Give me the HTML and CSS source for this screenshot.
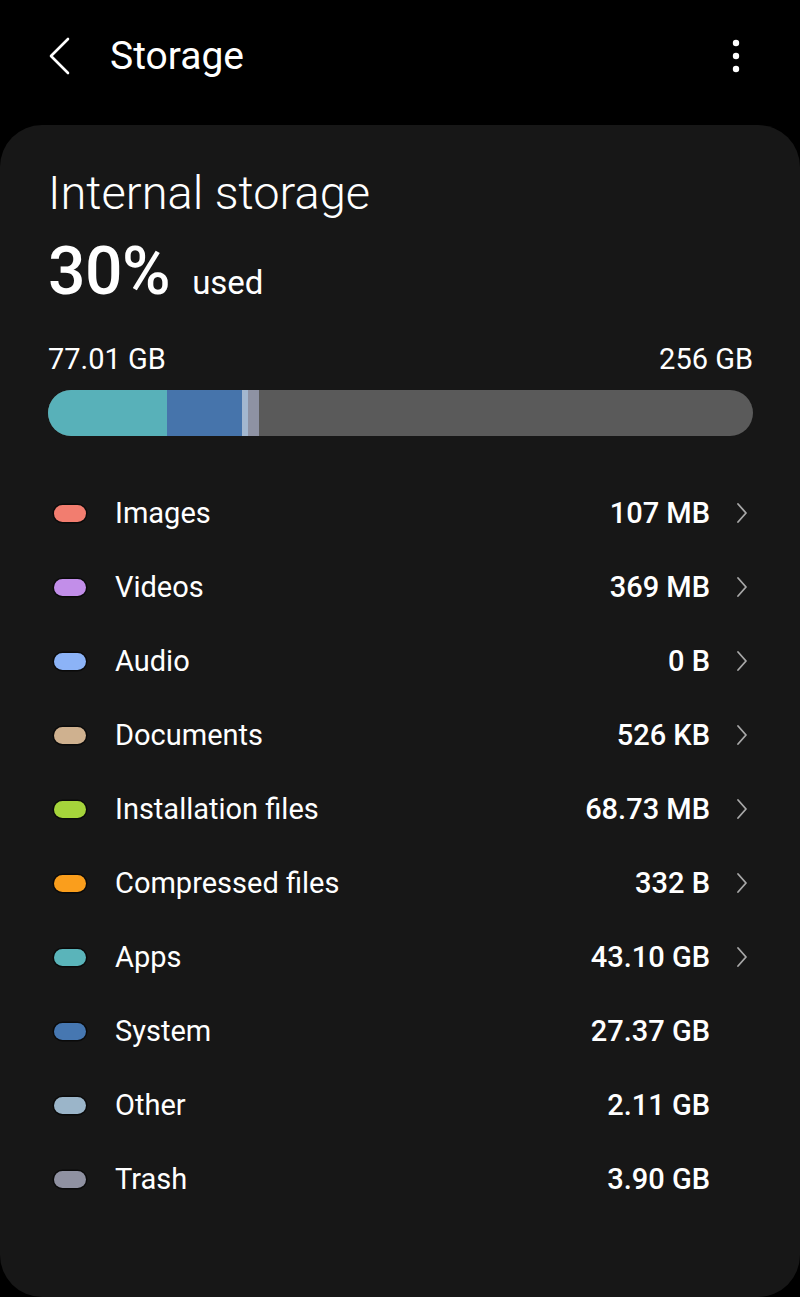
FILE: index.html
```html
<!DOCTYPE html>
<html lang="en">
<head>
<meta charset="utf-8">
<title>Storage</title>
<link rel="stylesheet" href="styles.css">
</head>
<body>
<header class="appbar">
  <svg class="back" width="24" height="40" viewBox="0 0 24 40"><polyline points="20,3 3,20 20,37" fill="none" stroke="#fff" stroke-width="2.6" stroke-linecap="round" stroke-linejoin="round"/></svg>
  <h1 class="title">Storage</h1>
  <svg class="more" width="8" height="34" viewBox="0 0 8 34"><circle cx="4" cy="4" r="3.2" fill="#fff"/><circle cx="4" cy="17" r="3.2" fill="#fff"/><circle cx="4" cy="30" r="3.2" fill="#fff"/></svg>
</header>
<main class="card">
  <div class="heading">Internal storage</div>
  <div class="usage"><span class="pct">30%</span><span class="used">used</span></div>
  <div class="scale"><span>77.01 GB</span><span>256 GB</span></div>
  <div class="bar">
    <div class="seg apps" style="width:16.84%"></div>
    <div class="seg system" style="width:10.69%"></div>
    <div class="seg other" style="width:0.82%"></div>
    <div class="seg trash" style="width:1.52%"></div>
  </div>
  <ul class="list">
    <li class="row"><span class="pill c-images"></span><span class="label">Images</span><span class="value">107 MB</span><span class="chev"><svg width="12" height="22" viewBox="0 0 12 22"><polyline points="2,2 10,11 2,20" fill="none" stroke="#a8a8a8" stroke-width="1.8" stroke-linecap="round" stroke-linejoin="round"/></svg></span></li>
    <li class="row"><span class="pill c-videos"></span><span class="label">Videos</span><span class="value">369 MB</span><span class="chev"><svg width="12" height="22" viewBox="0 0 12 22"><polyline points="2,2 10,11 2,20" fill="none" stroke="#a8a8a8" stroke-width="1.8" stroke-linecap="round" stroke-linejoin="round"/></svg></span></li>
    <li class="row"><span class="pill c-audio"></span><span class="label">Audio</span><span class="value">0 B</span><span class="chev"><svg width="12" height="22" viewBox="0 0 12 22"><polyline points="2,2 10,11 2,20" fill="none" stroke="#a8a8a8" stroke-width="1.8" stroke-linecap="round" stroke-linejoin="round"/></svg></span></li>
    <li class="row"><span class="pill c-docs"></span><span class="label">Documents</span><span class="value">526 KB</span><span class="chev"><svg width="12" height="22" viewBox="0 0 12 22"><polyline points="2,2 10,11 2,20" fill="none" stroke="#a8a8a8" stroke-width="1.8" stroke-linecap="round" stroke-linejoin="round"/></svg></span></li>
    <li class="row"><span class="pill c-install"></span><span class="label">Installation files</span><span class="value">68.73 MB</span><span class="chev"><svg width="12" height="22" viewBox="0 0 12 22"><polyline points="2,2 10,11 2,20" fill="none" stroke="#a8a8a8" stroke-width="1.8" stroke-linecap="round" stroke-linejoin="round"/></svg></span></li>
    <li class="row"><span class="pill c-zip"></span><span class="label">Compressed files</span><span class="value">332 B</span><span class="chev"><svg width="12" height="22" viewBox="0 0 12 22"><polyline points="2,2 10,11 2,20" fill="none" stroke="#a8a8a8" stroke-width="1.8" stroke-linecap="round" stroke-linejoin="round"/></svg></span></li>
    <li class="row"><span class="pill c-apps"></span><span class="label">Apps</span><span class="value">43.10 GB</span><span class="chev"><svg width="12" height="22" viewBox="0 0 12 22"><polyline points="2,2 10,11 2,20" fill="none" stroke="#a8a8a8" stroke-width="1.8" stroke-linecap="round" stroke-linejoin="round"/></svg></span></li>
    <li class="row"><span class="pill c-system"></span><span class="label">System</span><span class="value">27.37 GB</span><span class="chev"></span></li>
    <li class="row"><span class="pill c-other"></span><span class="label">Other</span><span class="value">2.11 GB</span><span class="chev"></span></li>
    <li class="row"><span class="pill c-trash"></span><span class="label">Trash</span><span class="value">3.90 GB</span><span class="chev"></span></li>
  </ul>
</main>
</body>
</html>
```

FILE: styles.css
```css
* { box-sizing: border-box; }
html, body {
  margin: 0;
  padding: 0;
  background: #000;
  color: #fff;
  font-family: Roboto, "Noto Sans", "Liberation Sans", sans-serif;
}
body {
  width: 800px;
  height: 1297px;
  overflow: hidden;
  display: flex;
  flex-direction: column;
}
.appbar {
  height: 125px;
  flex: none;
  display: flex;
  align-items: center;
  padding: 0 0 14px 48px;
}
.back { display: block; margin-right: 38px; }
.title {
  margin: 0;
  font-size: 39px;
  font-weight: 400;
  line-height: 46px;
  flex: 1;
}
.more { display: block; margin-right: 60px; }
.card {
  flex: 1;
  background: #171717;
  border-radius: 42px;
  padding: 41px 47px 0 48px;
}
.heading {
  font-size: 47px;
  font-weight: 300;
  line-height: 54px;
}
.usage {
  display: flex;
  align-items: baseline;
  margin-top: 17px;
  line-height: 70px;
}
.pct {
  font-size: 66px;
  font-weight: 500;
  letter-spacing: -0.5px;
}
.used {
  font-size: 33px;
  font-weight: 400;
  margin-left: 22px;
}
.scale {
  display: flex;
  justify-content: space-between;
  font-size: 29px;
  line-height: 34px;
  margin-top: 24px;
}
.bar {
  margin-top: 14px;
  height: 46px;
  border-radius: 23px;
  background: #5a5a5a;
  display: flex;
  overflow: hidden;
}
.seg { height: 100%; }
.apps { background: #58b1b9; }
.system { background: #4674ab; }
.other { background: #a3b7cf; }
.trash { background: #8e92a3; }
.list {
  list-style: none;
  margin: 40px 0 0;
  padding: 0;
}
.row {
  height: 74px;
  display: flex;
  align-items: center;
  font-size: 29px;
}
.pill {
  width: 32px;
  height: 17px;
  border-radius: 9px;
  margin-left: 6px;
  margin-right: 29px;
  flex: none;
  box-shadow: 0 0 0 1.5px rgba(0,0,0,0.55);
}
.label { flex: 1; }
.value { font-weight: 500; }
.chev {
  width: 43px;
  display: flex;
  justify-content: flex-end;
  padding-right: 5px;
}
.chev svg { display: block; }
.c-images { background: #f27d6f; }
.c-videos { background: #c28ee9; }
.c-audio { background: #8cb3f7; }
.c-docs { background: #cfb18f; }
.c-install { background: #a5d43b; }
.c-zip { background: #fa9e1c; }
.c-apps { background: #5ab4ba; }
.c-system { background: #4677b1; }
.c-other { background: #9bb5c9; }
.c-trash { background: #8f91a1; }
```
